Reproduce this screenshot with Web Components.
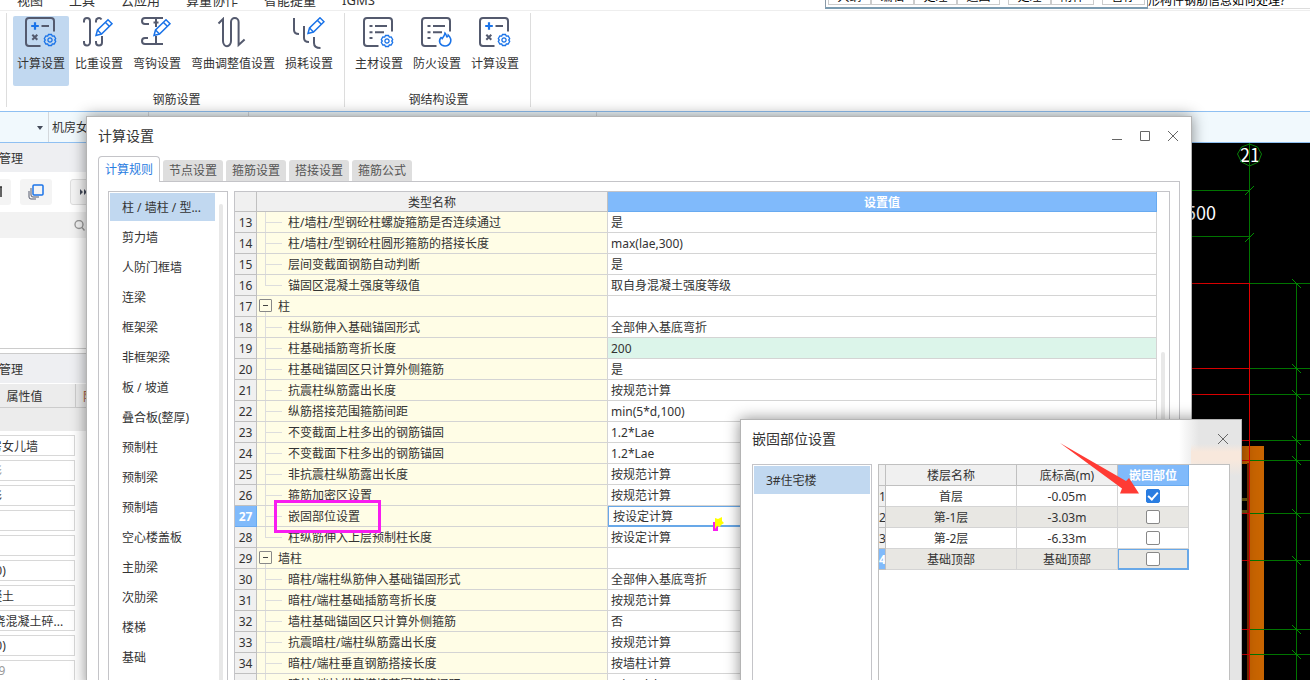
<!DOCTYPE html>
<html lang="zh-CN">
<head>
<meta charset="utf-8">
<title>计算设置</title>
<style>
html, body { margin: 0; height: 100%; overflow: hidden; }
body { font: 12px/20px "Noto Sans", "Noto Sans CJK SC", sans-serif; color: #333; background: #fff; }
</style>
</head>
<body>
<estimate-app></estimate-app>
<script>
const define = (name, markup) => customElements.define(name, class extends HTMLElement {
  connectedCallback() {
    if (this.shadowRoot) return;
    const root = this.attachShadow({ mode: 'open' });
    const html = typeof markup === 'function' ? markup(this) : markup;
    root.innerHTML = `<style>*{box-sizing:border-box}button,input,select{font:inherit;color:inherit;margin:0}</style>${html}`;
  }
});

/* ---------- icons ---------- */
const gear = (x, y) => `<g transform="translate(${x} ${y})" stroke="#1a73e8" stroke-width="1.3"><path d="M-1.5-5.5h3l.8 1.6 1.9-.1 1.5 2.6L4.700 0l1 1.400-1.500 2.600-1.900-.1-.8 1.600h-3l-.8-1.600-1.900.1-1.500-2.600 1-1.400-1-1.400 1.500-2.600 1.900.1z"/><circle r="2.100"/></g>`;
const pencil = (x, y) => `<g transform="translate(${x} ${y})" stroke="#1a73e8" stroke-width="1.500"><path fill="#fff" d="M1 16.500 2.500 11 13 .800 17 4.700 6.500 15z"/><path d="M10.500 3.500l3.800 3.700M2.500 11l4 4"/></g>`;
const frame = '<path d="M15.500 29H4a3 3 0 0 1-3-3V4a3 3 0 0 1 3-3h22a3 3 0 0 1 3 3v10.500"/>';
const lines = '<path d="M6.500 9h3M12 9h12M6.500 15.300h3M12 15.300h9M6.500 21h3"/>';
const ICONS = {
  calc: `${frame}<path d="M16.500 9h7.500M7.300 17.700l5 5M12.300 17.700l-5 5"/><path stroke="#1a73e8" stroke-width="2.200" d="M10 5.200v7.600M6.200 9h7.600"/>${gear(25, 23)}`,
  ratio: `<path d="M1 5.500V4a3 3 0 0 1 6 0v21.500a3 3 0 0 1-6 0v-1.500M13 5.500V4.500a3 3 0 0 1 5.500-2M19 19v6.500a3 3 0 0 1-6 0v-1.500"/>${pencil(12, 2)}`,
  hook: `<path d="M22 1H4a3 3 0 0 0 0 6h4M7 21H4a3 3 0 0 0 0 6h18M15 2v8M12.500 5.500h5M15 19v8"/>${pencil(12, 2)}`,
  bend: `<path d="M1.500 6.500 6 2v22a3.500 4.500 0 0 0 8 0V5a3.800 4 0 0 1 7.600 0v23l6-5.500"/>`,
  loss: `<path d="M1 1v12q0 4 5 4M11 9v12q0 4 5 4M21 20v6q0 5 6.500 5"/>${pencil(14, 0)}`,
  list: `${frame}${lines}${gear(24, 24)}`,
  fire: `${frame}${lines}<path stroke="#1a73e8" stroke-width="1.500" d="M24 16c1.500 1.500 1 3 2 4q1-.5 1.200-2c5 5 2 11-3.200 11s-7-5-4-8.500q1 0 1.300 1c1.200-1.500 2.400-3 2.700-5.500z"/>`
};

/* ---------- menu row, cut by the window's top edge ---------- */
define('menu-row', `<style>
:host{display:flex;align-items:flex-end;height:11px;overflow:hidden;border-bottom:1px solid #eee;padding-left:17px;font-size:13px}
nav{display:flex;gap:26px}
a{color:inherit;text-decoration:none;white-space:nowrap}
</style><nav><a href="#">视图</a><a href="#">工具</a><a href="#">云应用</a><a href="#">算量协作</a><a href="#">智能提量</a><a href="#">IGMS</a></nav>`);

define('quick-bar', `<style>
:host{position:absolute;top:0;right:0;left:825px;height:9px;display:flex;overflow:hidden;color:#000}
.keys{flex:none;display:flex;align-items:flex-end;border:1px solid #8a9aa8;border-top:0;border-bottom:2px solid #7b9bb0;padding:0 2px 2px;background:#fff}
button{width:43px;height:22px;border:1px solid #ccc;background:#fff;padding:5px 0 0;line-height:15px;white-space:nowrap}
.gap{margin-left:8px}
p{flex:1;margin:0;align-self:flex-end;border-bottom:1px solid #ddd;line-height:14px;white-space:nowrap}
</style><div class="keys"><button>大纲</button><button>编辑</button><button>处理</button><button>返回</button><button class="gap">处理</button><button>附件</button><button class="gap">暂停</button></div><p>形构件钢筋信息如何处理?</p>`);

/* ---------- ribbon ---------- */
define('ribbon-item', el => `<style>
:host{display:block}
button{display:flex;flex-direction:column;align-items:center;gap:5px;height:70px;padding:1px 4px;border:0;border-radius:2px;background:none;white-space:nowrap}
:host([active]) button{background:#c1d8f0}
svg{display:block;fill:none;stroke:#545a6e;stroke-width:2}
</style><button><svg width="32" height="32" viewBox="0 0 32 32">${ICONS[el.getAttribute('icon')]}</svg><slot></slot></button>`);

define('ribbon-group', el => `<style>
:host{display:flex;flex-direction:column;border-right:1px solid #ddd;padding:3px 7px 0 6px;height:94px}
.items{display:flex;gap:2px}
h2{margin:4px 0 0 3px;font:inherit;text-align:center}
</style><div class="items"><slot></slot></div><h2>${el.getAttribute('label')}</h2>`);

define('app-ribbon', `<style>
:host{display:flex;height:100px;padding:2px 0 0 6px}
i{width:1px;height:94px;background:#ddd}
</style><i></i>
<ribbon-group label="钢筋设置">
<ribbon-item icon="calc" active>计算设置</ribbon-item><ribbon-item icon="ratio">比重设置</ribbon-item><ribbon-item icon="hook">弯钩设置</ribbon-item><ribbon-item icon="bend">弯曲调整值设置</ribbon-item><ribbon-item icon="loss">损耗设置</ribbon-item>
</ribbon-group>
<ribbon-group label="钢结构设置">
<ribbon-item icon="list">主材设置</ribbon-item><ribbon-item icon="fire">防火设置</ribbon-item><ribbon-item icon="calc">计算设置</ribbon-item>
</ribbon-group>`);

define('selector-bar', `<style>
:host{display:flex;height:32px;border:solid #8fc0f2;border-width:1px 0;background:#f1f9fd}
label{position:relative;display:flex;flex:none;width:100px;border-right:1px solid #d4d8dc}
label.short{width:49px}
label.long{width:348px}
select{appearance:none;flex:1;min-width:0;border:0;border-radius:0;background:none;padding:2px 3px 0}
svg{position:absolute;right:5px;top:13px;fill:#444b5a}
</style>
<label class="short"><select aria-label="楼层"><option></option></select><svg width="6" height="5"><path d="M0 1h6L3 5z"/></svg></label>
<label><select aria-label="构件"><option>机房女儿墙</option></select></label>
<label><select aria-label="图层"><option></option></select></label>
<label class="long"><select aria-label="分层"><option></option></select></label>`);

/* ---------- docked panel; its left part is scrolled out of the window ---------- */
const PROPS = [['名称', '机房女儿墙'], ['形状', '矩形', 1], ['截面', '矩形'], ['宽度', ''], ['高度', ''], ['底标高', '(300)'], ['材质', '混凝土'], ['类型', '(现浇混凝土碎...'], ['顶标高', '(300)'], ['备注', '2999', 1]];
define('side-panel', `<style>
:host{display:block;flex:none;width:118px;margin-left:-26px;background:#fff}
h2{margin:0;height:29px;padding-left:1px;font:12px/31px "Noto Sans","Noto Sans CJK SC",sans-serif;background:#eeeff2}
.tools{display:flex;gap:9px;padding:7px 0;height:40px;overflow:hidden}
.tools button{flex:none;width:32px;height:26px;border:0;border-radius:3px;background:#f4f4f4;padding:0;display:grid;place-items:center}
.tools button:first-of-type{width:37px;justify-items:end;padding-right:8px}
.tools button:last-of-type{width:27px;margin-left:9px;border:1px solid #ddd}
.search{display:flex;align-items:center;justify-content:flex-end;height:26px;padding-right:7px;background:#f2f2f2}
.search input{flex:1;min-width:0;border:0;background:none;outline:0}
.tree{height:111px;border-bottom:1px solid #ccc;margin-bottom:4px}
h2.second{border-top:1px solid #ccc;height:30px}
.head{display:flex;margin-top:1px;height:24px;line-height:25px;background:#ececec;border-bottom:1px solid #ccc;white-space:nowrap;overflow:hidden}
.head span{flex:none;width:102px;text-align:center;border-right:1px solid #ccc}
.head b{font-weight:400;color:#a0522d;padding-left:7px}
.band{height:23px;background:#ececec}
label{display:block;margin-top:4px}
input.v{display:block;width:101px;height:21px;border:1px solid #d8d8d8;background:#fff;padding:0 3px}
input.dim{color:#999}
svg{display:block;fill:none}
</style>
<h2>构件管理</h2>
<div class="tools"><button aria-label="删除"><svg width="6" height="12"><path d="M0 1h5M4 1v10" stroke="#333" stroke-width="1.500"/></svg></button>
<button aria-label="复制"><svg width="16" height="16"><rect x="5" y="1" width="10" height="10" rx="1" stroke="#1a73e8" stroke-width="1.500"/><path d="M3 4v7q0 2 2 2h6M1 7v6q0 2 2 2h5" stroke="#545a6e"/></svg></button>
<button aria-label="更多"><svg width="8" height="6"><path fill="#444b5a" d="M0 0l3 3-3 3zM4 0l3 3-3 3z"/></svg></button></div>
<div class="search"><input aria-label="搜索"><svg width="11" height="11"><circle cx="5" cy="4.500" r="4" stroke="#999" stroke-width="1.400"/><path d="M8 7.500l2.500 3" stroke="#999" stroke-width="1.400"/></svg></div>
<div class="tree"></div>
<h2 class="second">属性管理</h2>
<div class="head"><span>属性值</span><b>附加</b></div>
<div class="band"></div>
${PROPS.map(([n, v, d]) => `<label><input class="v${d ? ' dim' : ''}" aria-label="${n}" value="${v}"></label>`).join('')}`);

/* ---------- drawing area ---------- */
const rows = [283, 368, 394, 440, 460, 513, 560, 629, 654];
define('cad-canvas', `<style>
:host{display:block;flex:1;min-width:0;background:#000;overflow:hidden}
svg{display:block;width:100%;height:100%;fill:none}
text{font:18px "Noto Sans CJK SC","Noto Sans",sans-serif;fill:#fff;text-anchor:middle}
</style><svg><g transform="translate(-92 -143)">
<path fill="#c86400" d="M1241 446h23v240h-14v-222h-9z"/><path fill="#7a2c00" d="M1247 463h2v220h-2z"/>
<path fill="#6b5a10" d="M1241 498h6v3h-6zM1241 510h6v3h-6z"/>
<text x="1250" y="162">21</text><text x="1201" y="220">500</text>
<path stroke="#0a800a" d="M1249.500 144l8 3 4 7-3 8-9 4-8-4-4-8 4-7z"/>
<path fill="#007400" d="M1249 143h1v140h-1zM1150 190h99v1h-99zM1150 236h99v1h-99z"/>
<path stroke="#009000" d="M1245 195l9-9M1245 242l9-9"/>
<path fill="#007400" d="M1296 283h1v420h-1z"/>
<path fill="#007400" d="${rows.map(y => `M1250 ${y}h900v1h-900z`).join('')}"/>
<path stroke="#009000" d="${rows.map(y => `M1292 ${y - 4}l9 9`).join('')}"/>
<path fill="#d80000" d="${rows.map(y => `M1150 ${y}h99v1h-99z`).join('')}"/>
<path fill="#e00000" d="M1249 283h1v420h-1z"/>
</g></svg>`);

/* ---------- window frame ---------- */
define('app-window', el => `<style>
:host{position:absolute;display:flex;flex-direction:column;background:#fff;border:1px solid #b4b4b4;box-shadow:0 0 14px rgba(0,0,0,.45);padding:0 11px}
header{display:flex;align-items:center;justify-content:space-between;flex:none;height:39px;padding-bottom:2px}
h1{margin:0;font-size:14px;font-weight:400;line-height:20px}
.ctl{display:flex;gap:18px;padding-right:2px}
.ctl button{border:0;background:none;padding:0;width:10px;height:10px;display:block}
svg{display:block;fill:none;stroke:#666}
</style><header><h1>${el.getAttribute('heading')}</h1><div class="ctl">${el.hasAttribute('resizable') ? `
<button aria-label="最小化"><svg width="10" height="10"><path d="M0 8.500h10"/></svg></button>
<button aria-label="最大化"><svg width="10" height="10"><path d="M.5.5h9v9h-9z"/></svg></button>` : ''}
<button aria-label="关闭"><svg width="10" height="10" style="overflow:visible"><path d="M0 0l10 10M10 0 0 10"/></svg></button></div></header><slot></slot>`);

define('tab-bar', `<style>
:host{display:flex;align-items:flex-end;gap:3px;height:26px;margin-bottom:-1px;position:relative}
button{height:21px;border:0;border-radius:3px 3px 0 0;background:#dedede;padding:0 6px;line-height:20px;color:#555;white-space:nowrap;margin-bottom:1px}
button[aria-selected=true]{height:26px;margin:0;border:1px solid #c4c4c8;border-bottom:0;background:#fff;color:#2a7de1;border-radius:4px 4px 0 0}
</style><button role="tab" aria-selected="true">计算规则</button><button role="tab">节点设置</button><button role="tab">箍筋设置</button><button role="tab">搭接设置</button><button role="tab">箍筋公式</button>`);

define('category-list', el => `<style>
:host{display:flex;gap:4px;flex:none;width:120px;border:1px solid #c4c4c8;border-bottom:0;padding:1px 4px 0 1px;overflow:hidden}
ul{flex:1;margin:0;padding:0;list-style:none;display:grid;gap:2px;align-content:start}
a{display:block;height:28px;line-height:30px;padding-left:12px;color:inherit;text-decoration:none;white-space:nowrap}
li:first-child a{background:#c1d8f0}
i{width:4px;margin-top:11px;border-radius:2px 2px 0 0;background:#e8e8e8}
:host([plain]){padding-right:1px}
</style><ul>${el.getAttribute('items').split('|').map(t => `<li><a href="#">${t}</a></li>`).join('')}</ul>${el.hasAttribute('plain') ? '' : '<i></i>'}`);

/* ---------- rule table ---------- */
const RULES = [
[13, '柱/墙柱/型钢砼柱螺旋箍筋是否连续通过', '是'], [14, '柱/墙柱/型钢砼柱圆形箍筋的搭接长度', 'max(lae,300)'],
[15, '层间变截面钢筋自动判断', '是'], [16, '锚固区混凝土强度等级值', '取自身混凝土强度等级', 'last'],
[17, '柱', '', 'group'], [18, '柱纵筋伸入基础锚固形式', '全部伸入基底弯折'], [19, '柱基础插筋弯折长度', '200', 'mint'],
[20, '柱基础锚固区只计算外侧箍筋', '是'], [21, '抗震柱纵筋露出长度', '按规范计算'], [22, '纵筋搭接范围箍筋间距', 'min(5*d,100)'],
[23, '不变截面上柱多出的钢筋锚固', '1.2*Lae'], [24, '不变截面下柱多出的钢筋锚固', '1.2*Lae'], [25, '非抗震柱纵筋露出长度', '按规范计算'],
[26, '箍筋加密区设置', '按规范计算'], [27, '嵌固部位设置', '按设定计算', 'current'], [28, '柱纵筋伸入上层预制柱长度', '按设定计算', 'last'],
[29, '墙柱', '', 'group'], [30, '暗柱/端柱纵筋伸入基础锚固形式', '全部伸入基底弯折'], [31, '暗柱/端柱基础插筋弯折长度', '按规范计算'],
[32, '墙柱基础锚固区只计算外侧箍筋', '否'], [33, '抗震暗柱/端柱纵筋露出长度', '按规范计算'], [34, '暗柱/端柱垂直钢筋搭接长度', '按墙柱计算'],
[35, '暗柱/端柱纵筋搭接范围箍筋间距', 'min(5*d,100)']];
define('rule-table', `<style>
:host{display:flex;align-items:flex-start;gap:4px;flex:1;min-width:0;border:1px solid #c4c4c8;border-bottom:0;padding-right:4px;overflow:hidden}
table{flex:1;min-width:0;border-collapse:separate;border-spacing:0;table-layout:fixed}
th,td{height:21px;padding:2px 0 0;border:solid #d4d4d4;border-width:0 1px 1px 0;line-height:18px;text-align:left;font-weight:400;white-space:nowrap;overflow:hidden}
thead th{height:20px;line-height:17px;text-align:center;background:#f0f0f0;border-color:#c0c0c0}
thead th:last-child{background:#80bafb;color:#fff;font-weight:700;border-color:#68aaf0}
tbody th{background:#f0f0f0;text-align:center;border-color:#c0c0c0}
.name{position:relative;background:#fffde6;padding-left:31px}
.name::before,.name::after{content:"";position:absolute;left:8px;background:#ddd}
.name::before{top:0;bottom:-1px;width:1px}
.name::after{top:10px;width:17px;height:1px}
.last .name::before{bottom:10px}
.group .name{padding-left:21px}
.group .name::before{top:15px}
.group .name::after{display:none}
.name button{position:absolute;left:2px;top:3px;width:13px;height:13px;border:1px solid #888;border-radius:1px;background:#fffde6;padding:0;display:grid;place-items:center}
.name button::before{content:"";width:5px;height:1px;background:#444}
.val{padding-left:3px}
.mint .val{background:#dcf5ea}
.current th{background:#80bafb;color:#fff;font-weight:700;border-color:#68aaf0}
.current .val{box-shadow:inset 0 0 0 1px #68a8e8;border-color:#68a8e8;padding-left:5px}
i{flex:none;width:4px;height:400px;margin-top:160px;border-radius:2px;background:#e8e8e8}
</style><table><colgroup><col style="width:22px"><col style="width:351px"><col></colgroup>
<thead><tr><th></th><th>类型名称</th><th>设置值</th></tr></thead>
<tbody>${RULES.map(([n, a, b, c]) => `<tr class="${c || ''}"><th>${n}</th><td class="name">${c === 'group' ? '<button aria-label="折叠"></button>' : ''}${a}</td><td class="val">${b}</td></tr>`).join('')}</tbody></table><i></i>`);

/* ---------- floor table ---------- */
const FLOORS = [['首层', '-0.05m', 1], ['第-1层', '-3.03m'], ['第-2层', '-6.33m'], ['基础顶部', '基础顶部']];
define('floor-table', `<style>
:host{display:block;flex:1;min-width:0;border:1px solid #c0c0c0;border-bottom:0;background:#fff;overflow:hidden}
table{width:310px;border-collapse:separate;border-spacing:0;table-layout:fixed}
th,td{height:21px;padding:2px 0 0;border:solid #d4d4d4;border-width:0 1px 1px 0;line-height:18px;text-align:center;font-weight:400;white-space:nowrap;overflow:hidden}
th{background:#f0f0f0;border-color:#c0c0c0}
tbody th{text-align:left}
td:last-child{padding:0}
thead th:last-child{background:#80bafb;color:#fff;font-weight:700;border-color:#68aaf0}
tbody tr:nth-child(even) td{background:#e8e7e3}
tbody tr:last-child th{background:#80bafb;color:#fff;font-weight:700}
tbody tr:last-child td:last-child{box-shadow:inset 0 0 0 1px #68a8e8;border-color:#68a8e8}
input{appearance:none;display:block;width:14px;height:14px;margin:0 auto;border:1px solid #888;border-radius:2px;background:#fff}
input:checked{background:#2a7de1;border-color:#2a7de1}
input:checked::after{content:"";display:block;width:4px;height:8px;margin:0 auto;border:solid #fff;border-width:0 2px 2px 0;transform:rotate(42deg)}
</style><table><colgroup><col style="width:7px"><col style="width:131px"><col style="width:101px"><col></colgroup>
<thead><tr><th></th><th>楼层名称</th><th>底标高(m)</th><th>嵌固部位</th></tr></thead>
<tbody>${FLOORS.map(([a, b, c], i) => `<tr><th>${i + 1}</th><td>${a}</td><td>${b}</td><td><input type="checkbox" aria-label="${a}嵌固部位"${c ? ' checked' : ''}></td></tr>`).join('')}</tbody></table>`);

/* ---------- marks drawn over the windows ---------- */
define('mark-layer', `<style>
:host{position:absolute;inset:0;pointer-events:none}
svg{display:block;width:100%;height:100%}
</style><svg>
<rect x="275.500" y="501.500" width="104" height="30" fill="none" stroke="#f81cf0" stroke-width="3"/>
<path fill="#f81cf0" d="M713 522h5v9h-5z"/><path fill="#fff" d="M715 524h1v4h-1z"/><path fill="#ff0" d="M715 518l3 1 4-2v4l2 2-3 2-1 2-3-1-2 3z"/>
<path fill="#ff3b34" d="M1060 443l66 38 3-3 10 15.500-19 0 2-5z"/>
</svg>`);

define('estimate-app', `<style>
:host{position:relative;display:flex;flex-direction:column;height:100vh;overflow:hidden}
main{display:flex;flex:1;min-height:0}
.rules{left:86px;right:118px;top:116px;bottom:-8px}
.anchor{width:502px;right:68px;top:419px;bottom:-8px;background:linear-gradient(transparent 24px,#f8e8dc 32px,#f8e8dc 40px,transparent 56px) right/50px 100% no-repeat,linear-gradient(90deg,#fff calc(100% - 62px),#e5e5e5 calc(100% - 42px))}
.pane{display:flex;gap:6px;flex:1;min-height:0;border:1px solid #c4c4c8;border-bottom:0;padding:9px 9px 0}
.split{display:flex;gap:6px;flex:1;min-height:0;padding-top:5px}
</style>
<menu-row></menu-row><quick-bar></quick-bar><app-ribbon></app-ribbon><selector-bar></selector-bar>
<main><side-panel></side-panel><cad-canvas></cad-canvas></main>
<app-window class="rules" heading="计算设置" resizable>
<tab-bar role="tablist"></tab-bar>
<div class="pane"><category-list items="柱 / 墙柱 / 型...|剪力墙|人防门框墙|连梁|框架梁|非框架梁|板 / 坡道|叠合板(整厚)|预制柱|预制梁|预制墙|空心楼盖板|主肋梁|次肋梁|楼梯|基础"></category-list><rule-table></rule-table></div>
</app-window>
<app-window class="anchor" heading="嵌固部位设置">
<div class="split"><category-list plain items="3#住宅楼"></category-list><floor-table></floor-table></div>
</app-window>
<mark-layer></mark-layer>`);
</script>
</body>
</html>
